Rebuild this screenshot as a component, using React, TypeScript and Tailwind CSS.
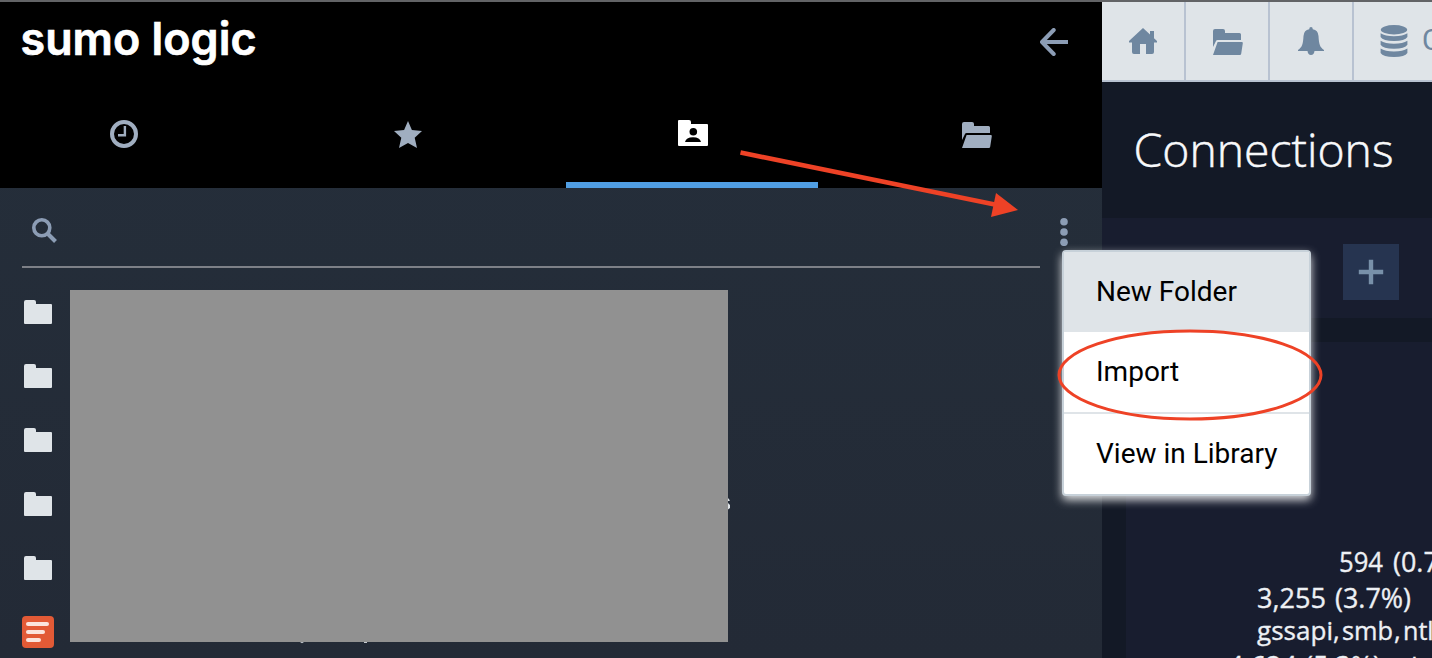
import React from "react";

const Folder = ({ open = false, className = "" }: { open?: boolean; className?: string }) =>
  open ? (
    <svg viewBox="0 0 30 26" width="30" height="26" className={className} fill="currentColor">
      <path d="M0 18V2Q0 0 2 0H10Q12 0 12 2V4H26.5Q28 4 28 5.5V11H4.6Q3.4 11 3 12Z" />
      <path d="M4.6 13H28.8Q30 13 29.8 14.2L28.2 24.8Q28 26 26.8 26H0Z" />
    </svg>
  ) : (
    <svg viewBox="0 0 28 24" width="28" height="24" className={className} fill="currentColor">
      <path d="M0 2Q0 0 2 0H10Q12 0 12 2V4H27Q28 4 28 5V23Q28 24 27 24H1Q0 24 0 23Z" />
    </svg>
  );

const Clock = () => (
  <svg viewBox="0 0 28 28" width="28" height="28" fill="none" stroke="currentColor">
    <circle cx="14" cy="14" r="12" strokeWidth="4" />
    <path d="M14.9 6v9.2H8" strokeWidth="2.4" />
  </svg>
);

const Star = () => (
  <svg viewBox="0 0 28 27" width="28" height="27" fill="currentColor">
    <path d="M14 0 17.9 9 28 10 20.7 16.8 23 27 14 22 5 27 7.3 16.8 0 10 10.1 9Z" />
  </svg>
);

const PersonFolder = () => (
  <svg viewBox="0 0 30 26" width="30" height="26">
    <path d="M0 1Q0 0 1 0H11Q13 0 13 2V4H29Q30 4 30 5V25Q30 26 29 26H1Q0 26 0 25Z" fill="#fff" />
    <circle cx="15.3" cy="11.8" r="3.8" fill="#000" />
    <path d="M7 22Q8 17.3 15 17.2Q22 17.3 23 22Z" fill="#000" />
  </svg>
);

const Home = () => (
  <svg viewBox="0 0 28 26" width="28" height="26" fill="currentColor">
    <path d="M14 0 21 6.4V3H25V10.2L28 13V14.5H25V24Q25 26 23 26H17V16H11V26H5Q3 26 3 24V14.5H0V13Z" />
  </svg>
);

const Bell = () => (
  <svg viewBox="0 0 26 28" width="26" height="28" fill="currentColor">
    <path d="M13 0Q14.7 0 14.8 2.3Q20 3 20.5 9C21 18 22 20 26 23V24H16.5Q16 28 13 28Q10 28 9.5 24H0V23C4 20 5 18 5.5 9Q6 3 11.2 2.3Q11.3 0 13 0Z" />
  </svg>
);

const Database = () => (
  <svg viewBox="0 0 28 32" width="28" height="32" fill="currentColor">
    <ellipse cx="14" cy="4.7" rx="13.2" ry="4.7" />
    <path d="M.6 8.3Q5 11.3 14 11.3T27.4 8.3V12Q25 16 14 16T.6 12Z" />
    <path d="M.6 15.8Q5 18.8 14 18.8T27.4 15.8V19.8Q25 23.8 14 23.8T.6 19.8Z" />
    <path d="M.6 23.6Q5 26.6 14 26.6T27.4 23.6V28Q25 32 14 32T.6 28Z" />
  </svg>
);

const Sidebar = () => (
  <aside className="flex w-[1102px] shrink-0 flex-col bg-[linear-gradient(#252f3b,#232a36)]">
    <header className="flex h-[186px] flex-col bg-black">
      <div className="flex h-20 items-start justify-between pl-[20px] pr-[34px]">
        <svg width="240" height="66">
          <text x="0.5" y="52.5" textLength="236" lengthAdjust="spacingAndGlyphs" className="fill-white stroke-white stroke-[0.7] font-[Inter] text-[45px] font-semibold">sumo logic</text>
        </svg>
        <svg viewBox="0 0 28 28" width="28" height="28" className="mt-[26px] text-[#8c9db5]" fill="none" stroke="currentColor" strokeWidth="4">
          <path d="M28 14H3" />
          <path d="M13.7 2 2 14 13.7 26" strokeLinecap="round" strokeLinejoin="round" />
        </svg>
      </div>
      <nav className="-ml-[2px] grid h-[106px] grid-cols-4 gap-8 text-[#a0aec0]">
        <div className="flex justify-center pt-[38px]"><Clock /></div>
        <div className="flex justify-center pt-[39px]"><Star /></div>
        <div className="flex justify-center border-b-[6px] border-[#509ee3] pl-[1px] pt-[38px]"><PersonFolder /></div>
        <div className="flex justify-center pl-[1px] pt-[40px]"><Folder open /></div>
      </nav>
    </header>

    <div className="flex h-[80px] shrink-0 pl-[22px]">
      <div className="w-[1018px] border-b-2 border-[#7d8087] pl-[10px] pt-[30px] text-[#8c9db5]">
        <svg viewBox="0 0 25 25" width="25" height="25" fill="none" stroke="currentColor">
          <circle cx="9.8" cy="9.8" r="8" strokeWidth="3.6" />
          <path d="m15.5 15.5 8 8" strokeWidth="4" />
        </svg>
      </div>
      <svg viewBox="0 0 8 28" width="8" height="28" className="ml-[20px] mt-[30px]" fill="#8c9db5">
        <circle cx="4" cy="3.8" r="3.8" />
        <circle cx="4" cy="14" r="3.8" />
        <circle cx="4" cy="24.3" r="3.8" />
      </svg>
    </div>

    <div className="flex pl-[22px] pt-[22px]">
      <div className="flex w-[48px] shrink-0 flex-col pt-[10px] text-[#dfe4e8]">
        {[0, 1, 2, 3, 4].map((row) => (
          <div key={row} className="h-16 pl-[2px]"><Folder /></div>
        ))}
        <div className="-mt-[4px] flex h-8 w-8 flex-col gap-1 rounded-[4px] bg-[#e25a36] pl-[4px] pt-[6px]">
          <span className="h-1 w-[23px] rounded-full bg-[#fbe4dd]" />
          <span className="h-1 w-[19px] rounded-full bg-[#fbe4dd]" />
          <span className="h-1 w-[15px] rounded-full bg-[#fbe4dd]" />
        </div>
      </div>
      <div className="relative h-[352px] w-[658px] bg-[#919191]">
        <svg className="absolute left-[229px] top-[352px]" width="70" height="2" fill="#c5cad0">
          <path d="M1 0H5L3 1.3ZM65 0H68V1H65Z" />
        </svg>
        <svg className="absolute left-[658px] top-[207px]" width="3" height="14" fill="#dfe4e8">
          <path d="M0 1L1.6 3V4H0ZM0 6L2 8V11L0 12.5Z" />
        </svg>
      </div>
    </div>
  </aside>
);

const Main = () => (
  <main className="flex w-[330px] shrink-0 flex-col overflow-hidden bg-[#131926]">
    <div className="flex h-20 shrink-0 border-b-2 border-[#b8c2d1] bg-[#dfe4e8] text-[#6f87a0]">
      <div className="flex w-[84px] shrink-0 justify-center border-r-2 border-[#b8c2d1] pt-[26px]"><Home /></div>
      <div className="flex w-[84px] shrink-0 justify-center border-r-2 border-[#b8c2d1] pl-[2px] pt-[27px]"><Folder open /></div>
      <div className="flex w-[84px] shrink-0 justify-center border-r-2 border-[#b8c2d1] pt-[25px]"><Bell /></div>
      <div className="flex shrink-0 gap-[14px] pl-[26px] pt-[23px]">
        <Database />
        <span className="font-[Roboto] text-[29px] leading-[31px]">Connections</span>
      </div>
    </div>
    <div className="h-[136px] shrink-0">
      <svg width="330" height="136">
        <text x="31.5" y="84.5" textLength="260" lengthAdjust="spacingAndGlyphs" className="fill-[#f8f9fb] stroke-[#f8f9fb] stroke-[0.5] font-['Open_Sans'] text-[46px] font-light">Connections</text>
      </svg>
    </div>
    <div className="flex h-[100px] shrink-0 bg-[#181d2f] pl-[241px] pt-[26px]">
      <button className="flex h-[56px] w-[56px] items-center justify-center bg-[#263450]">
        <svg width="26" height="26" viewBox="0 0 26 26" stroke="#7890a9" strokeWidth="4.4">
          <path d="M13 .8V25.2M.8 13H25.2" />
        </svg>
      </button>
    </div>
    <section className="ml-6 mt-6 h-[316px] shrink-0 bg-[#181d2f]">
      <svg width="306" height="316" className="fill-[#edf0f4] stroke-[#edf0f4] stroke-[0.35] font-['Open_Sans'] text-[27px]">
        <text y="230">
          <tspan x="213" textLength="44" lengthAdjust="spacingAndGlyphs">594</tspan>
          <tspan x="267" textLength="76" lengthAdjust="spacingAndGlyphs">(0.7%)</tspan>
        </text>
        <text y="266">
          <tspan x="131" textLength="69" lengthAdjust="spacingAndGlyphs">3,255</tspan>
          <tspan x="209" textLength="76" lengthAdjust="spacingAndGlyphs">(3.7%)</tspan>
        </text>
        <text y="297.5" className="text-[26px]">
          <tspan x="131" textLength="76" lengthAdjust="spacingAndGlyphs">gssapi</tspan>
          <tspan x="207">,</tspan>
          <tspan x="216" textLength="51" lengthAdjust="spacingAndGlyphs">smb</tspan>
          <tspan x="268">,</tspan>
          <tspan x="277" textLength="54" lengthAdjust="spacingAndGlyphs">ntlm</tspan>
        </text>
        <text y="333.5">
          <tspan x="102" textLength="69" lengthAdjust="spacingAndGlyphs">4,624</tspan>
          <tspan x="179" textLength="76" lengthAdjust="spacingAndGlyphs">(5.3%)</tspan>
          <tspan x="261" className="text-[25px]">nd</tspan>
        </text>
      </svg>
    </section>
  </main>
);

const Menu = () => (
  <div className="absolute left-[1062px] top-[250px] flex h-[246px] w-[249px] flex-col rounded-[4px] border-2 border-[#c7d1d9] bg-white font-[Roboto] text-[28px] leading-[80px] text-black shadow-[0_4px_10px_rgba(255,255,255,0.85)]">
    <div className="h-[80px] bg-[#dfe4e8] pl-8">New Folder</div>
    <div className="h-[82px] border-b-2 border-[#dfe4e8] pl-8">Import</div>
    <div className="h-[80px] pl-8">View in Library</div>
  </div>
);

export default function App() {
  return (
    <div className="relative flex h-[658px] w-[1432px] overflow-hidden border-t-2 border-[#626366]">
      <Sidebar />
      <Main />
      <div className="absolute -top-[2px] left-0">
        <Menu />
        <svg className="absolute left-0 top-0" width="1432" height="658" fill="none" stroke="#ee4226">
          <path d="M740.5 152.5 996 204.8" strokeWidth="4.6" />
          <path d="M996 193 1018 210 991 217Z" fill="#ee4226" stroke="none" />
          <ellipse cx="1190" cy="375" rx="131" ry="44" strokeWidth="3" />
        </svg>
      </div>
    </div>
  );
}
